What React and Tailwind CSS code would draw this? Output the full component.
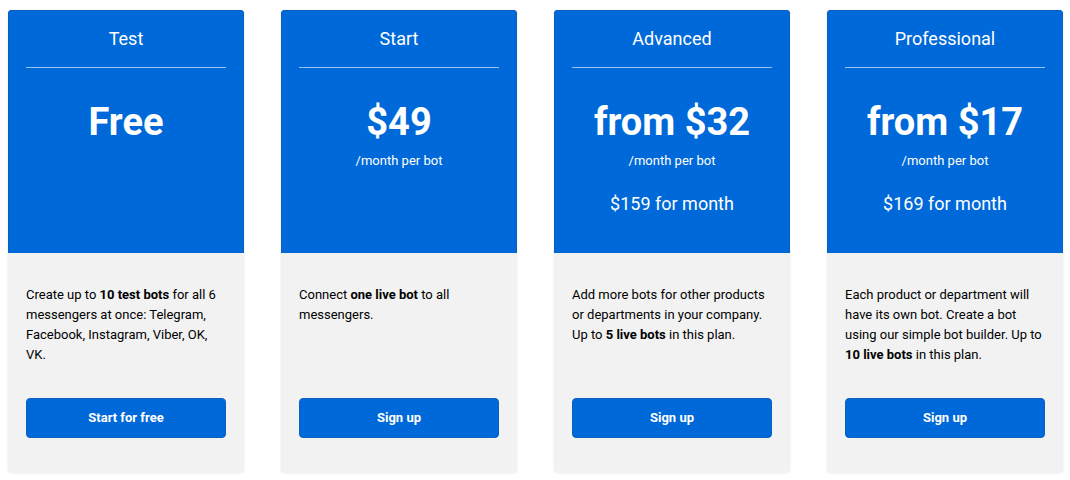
import React from 'react'

const plans = [
  {
    name: 'Test',
    price: 'Free',
    button: 'Start for free',
    text: (
      <>
        Create up to <b>10 test bots</b> for all 6 messengers at once: Telegram, Facebook, Instagram, Viber, OK, VK.
      </>
    ),
  },
  {
    name: 'Start',
    price: '$49',
    per: '/month per bot',
    button: 'Sign up',
    text: (
      <>
        Connect <b>one live bot</b> to all messengers.
      </>
    ),
  },
  {
    name: 'Advanced',
    price: 'from $32',
    per: '/month per bot',
    total: '$159 for month',
    button: 'Sign up',
    text: (
      <>
        Add more bots for other products or departments in your company. Up to <b>5 live bots</b> in this plan.
      </>
    ),
  },
  {
    name: 'Professional',
    price: 'from $17',
    per: '/month per bot',
    total: '$169 for month',
    button: 'Sign up',
    text: (
      <>
        Each product or department will have its own bot. Create a bot using our simple bot builder. Up to <b>10 live bots</b> in this plan.
      </>
    ),
  },
]

function PlanCard({ plan }) {
  return (
    <div className="flex w-[236px] flex-col overflow-hidden rounded-[4px] shadow-[0_0_2px_rgba(0,0,0,0.12)]">
      <div className="flex h-[243px] flex-col items-center border border-b-0 border-[#0b5fbd] bg-[#0069d9] px-[17px] pt-[16px] text-white">
        <div className="text-[18px] leading-[24px]">{plan.name}</div>
        <div className="mt-[16px] h-px w-full bg-[#9cc4f0]" />
        <div className="mt-[32px] text-[38px] font-bold leading-[44px]">{plan.price}</div>
        {plan.per && <div className="mt-[8px] text-[13px] leading-[18px]">{plan.per}</div>}
        {plan.total && <div className="mt-[22px] text-[18px] leading-[24px]">{plan.total}</div>}
      </div>
      <div className="flex h-[220px] flex-col bg-[#f2f2f2] px-[18px] pt-[32px] pb-[35px]">
        <p className="text-[13px] leading-[20px] text-black">{plan.text}</p>
        <button className="mt-auto h-[40px] w-full rounded-[4px] border border-[#0b5fbd] bg-[#0069d9] text-[13px] font-bold text-white">
          {plan.button}
        </button>
      </div>
    </div>
  )
}

export default function App() {
  return (
    <div className="h-[480px] w-[1070px] bg-white pt-[10px] pl-[8px] font-['Roboto',sans-serif]">
      <div className="flex gap-[37px]">
        {plans.map((p) => (
          <PlanCard key={p.name} plan={p} />
        ))}
      </div>
    </div>
  )
}
